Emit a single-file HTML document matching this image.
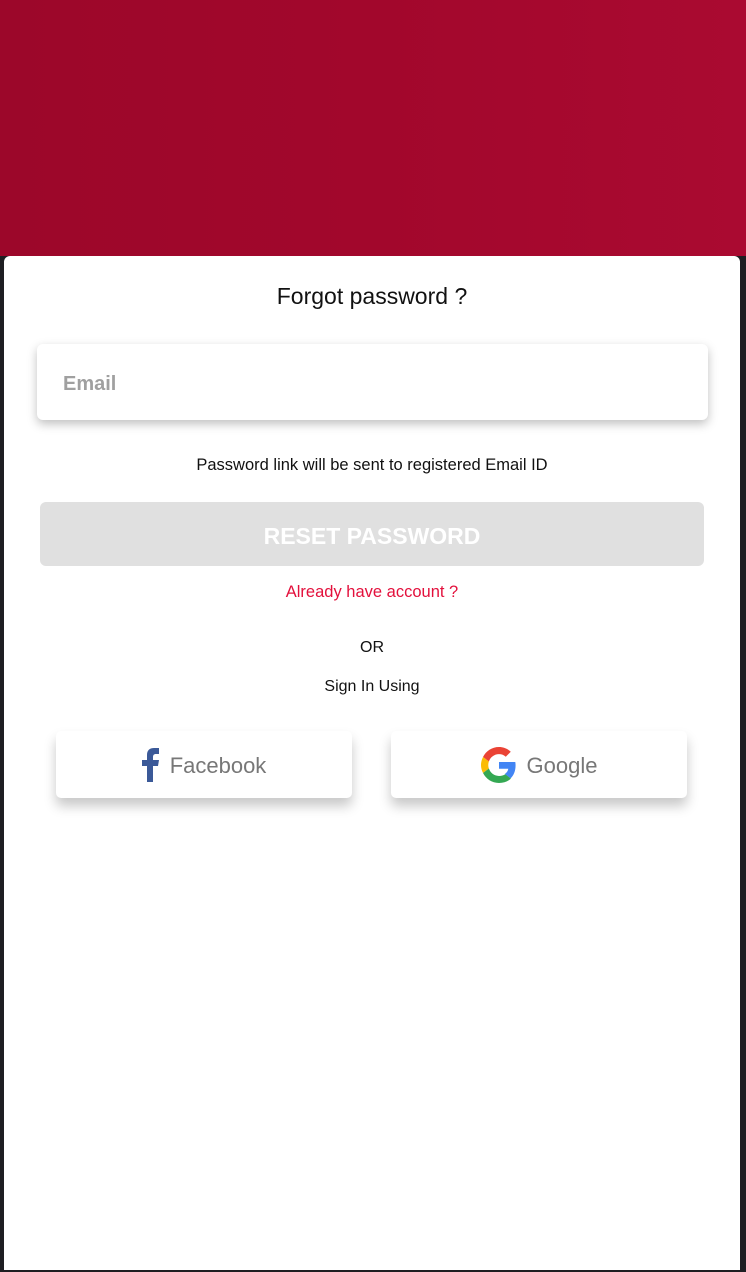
<!DOCTYPE html>
<html><head><meta charset="utf-8"><style>
*{margin:0;padding:0;box-sizing:border-box}
body{width:746px;height:1272px;background:#1e1e22;position:relative;overflow:hidden;font-family:"Liberation Sans",sans-serif}
.top{position:absolute;left:0;top:0;width:746px;height:256px;background:linear-gradient(90deg,#9c072a,#a2072c 50%,#aa0a31)}
.card{position:absolute;left:4px;top:256px;width:736px;height:1014px;background:#fff;border-radius:6px 6px 0 0}
.title{position:absolute;top:27px;width:100%;text-align:center;font-size:23px;color:#111}
.email{position:absolute;left:33px;top:88px;width:671px;height:76px;border-radius:6px;background:#fff;box-shadow:0 4px 10px rgba(0,0,0,.25);padding-left:26px;line-height:80px;font-size:20px;font-weight:bold;color:#a0a0a0}
.hint{position:absolute;top:200px;width:100%;text-align:center;font-size:16.5px;color:#111}
.reset{position:absolute;left:36px;top:246px;width:664px;height:64px;border-radius:6px;background:#e0e0e0;color:#fff;text-align:center;line-height:68px;font-size:23px;font-weight:bold}
.already{position:absolute;top:327px;width:100%;text-align:center;font-size:16.5px;color:#e3103c}
.or{position:absolute;top:383px;width:100%;text-align:center;font-size:16px;color:#111}
.using{position:absolute;top:422px;width:100%;text-align:center;font-size:16px;color:#111}
.btn{position:absolute;top:475px;width:296px;height:67px;border-radius:5px;background:#fff;box-shadow:0 8px 12px rgba(0,0,0,.22);display:flex;align-items:center;justify-content:center;font-size:22px;color:#777;padding-top:3px}
.btn svg{margin-right:10px;margin-top:-3px}
</style></head><body>
<div class="top"></div>
<div class="card">
<div class="title">Forgot password ?</div>
<div class="email">Email</div>
<div class="hint">Password link will be sent to registered Email ID</div>
<div class="reset">RESET PASSWORD</div>
<div class="already">Already have account ?</div>
<div class="or">OR</div>
<div class="using">Sign In Using</div>
<div class="btn" style="left:52px"><svg width="18" height="34" viewBox="0 0 18 34"><path d="M5 34V18H0v-6h5V7c0-5 3-7 7-7h5v6h-3c-2 0-3 1-3 3v3h6l-1 6h-5v16z" fill="#3b5998"/></svg>Facebook</div>
<div class="btn" style="left:387px"><svg width="36" height="36" viewBox="0 0 48 48"><path fill="#EA4335" d="M24 9.5c3.5 0 6.6 1.2 9 3.5l6.7-6.7C35.6 2.4 30.2 0 24 0 14.6 0 6.6 5.4 2.7 13.3l7.8 6C12.4 13.7 17.7 9.5 24 9.5z"/><path fill="#4285F4" d="M46.1 24.5c0-1.6-.1-3.1-.4-4.5H24v9h12.4c-.5 2.900-2.2 5.4-4.7 7l7.6 5.9c4.4-4.1 6.8-10.1 6.8-17.4z"/><path fill="#FBBC05" d="M10.5 28.7c-.5-1.5-.8-3-.8-4.700s.3-3.2.8-4.7l-7.8-6C1 16.6 0 20.2 0 24s1 7.4 2.7 10.7l7.8-6z"/><path fill="#34A853" d="M24 48c6.5 0 11.9-2.1 15.9-5.8l-7.6-5.9c-2.1 1.4-4.9 2.3-8.3 2.3-6.3 0-11.6-4.2-13.5-9.9l-7.8 6C6.6 42.6 14.6 48 24 48z"/></svg>Google</div>
</div>
</body></html>
